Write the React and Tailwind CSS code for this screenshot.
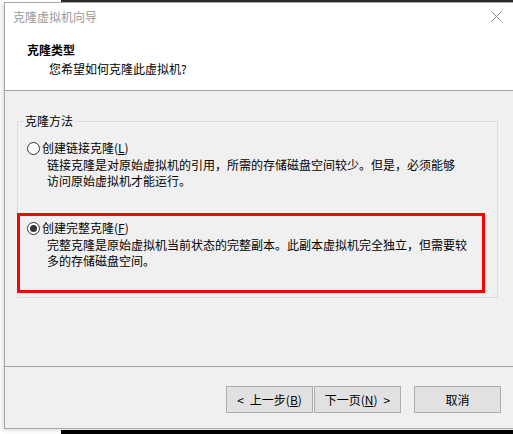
import React from "react";

const font = { fontFamily: '"Microsoft YaHei", "Noto Sans CJK SC", "Noto Sans", sans-serif' };

function Radio({ checked }) {
  return (
    <span className="w-[13px] h-[13px] rounded-full border border-[#333333] bg-white flex items-center justify-center shrink-0">
      {checked && <span className="w-[7px] h-[7px] rounded-full bg-[#333333]" />}
    </span>
  );
}

function Btn({ children, className = "" }) {
  return (
    <div className={"w-[87px] h-[27px] border border-[#adadad] bg-[#e1e1e1] flex items-center justify-center text-[12px] leading-[16px] text-black " + className}>
      {children}
    </div>
  );
}

export default function App() {
  return (
    <div className="w-[513px] h-[434px] bg-white overflow-hidden flex flex-col" style={font}>
      <div className="h-[2px] ml-[61px] bg-[#2b2b2b] shrink-0" />
      <div className="ml-[4px] w-[520px] h-[427px] border border-[#a6a6a6] flex flex-col shrink-0 shadow-[-2px_2px_4px_rgba(0,0,0,0.12)]">
        {/* header */}
        <div className="bg-white h-[88px] border-b border-[#a0a0a0] flex flex-col shrink-0">
          <div className="w-[508px] flex items-center justify-between pt-[6px] pl-[8px] pr-[11px]">
            <span className="text-[12px] leading-[16px] text-[#999999]">克隆虚拟机向导</span>
            <svg width="11" height="11" viewBox="0 0 11 11" className="mt-[-1px]">
              <path d="M0.5 0.5 L10.5 10.5 M10.5 0.5 L0.5 10.5" stroke="#8a8a8a" strokeWidth="1" fill="none" />
            </svg>
          </div>
          <div className="mt-[17px] pl-[22px] text-[12px] leading-[16px] font-bold text-black">克隆类型</div>
          <div className="mt-[3px] pl-[44px] text-[12px] leading-[16px] text-black">您希望如何克隆此虚拟机?</div>
        </div>
        {/* body */}
        <div className="bg-[#f0f0f0] h-[275px] shrink-0 pt-[22px] pl-[12px]">
          <fieldset className="w-[481px] h-[185px] border border-[#dcdcdc] m-0 p-0">
            <legend className="ml-[6px] px-[1px] text-[12px] leading-[16px] text-black">克隆方法</legend>
            <div className="mt-[11px] pl-[9px]">
              <div className="flex items-center gap-[2px] text-[12px] leading-[16px] text-black">
                <Radio />
                <span>创建链接克隆(<span className="underline">L</span>)</span>
              </div>
              <div className="mt-[1px] pl-[20px] text-[12px] leading-[16px] text-black">
                <div>链接克隆是对原始虚拟机的引用，所需的存储磁盘空间较少。但是，必须能够</div>
                <div>访问原始虚拟机才能运行。</div>
              </div>
            </div>
            <div className="relative mt-[31px] pl-[9px]">
              <div className="flex items-center gap-[2px] text-[12px] leading-[16px] text-black">
                <Radio checked />
                <span>创建完整克隆(<span className="underline">F</span>)</span>
              </div>
              <div className="mt-[1px] pl-[20px] text-[12px] leading-[16px] text-black">
                <div>完整克隆是原始虚拟机当前状态的完整副本。此副本虚拟机完全独立，但需要较</div>
                <div>多的存储磁盘空间。</div>
              </div>
              <div className="absolute left-[-1px] top-[-7px] w-[468px] h-[80px] border-[3px] border-[#ff0000] pointer-events-none" />
            </div>
          </fieldset>
        </div>
        {/* footer */}
        <div className="bg-[#f0f0f0] flex-1 border-t border-[#a0a0a0] pt-[19px] pl-[221px] flex items-start">
          <Btn>
            <span className="mr-[6px]">&lt;</span>上一步(<span className="underline">B</span>)
          </Btn>
          <Btn className="ml-[1px]">
            下一页(<span className="underline">N</span>)<span className="ml-[6px]">&gt;</span>
          </Btn>
          <Btn className="ml-[13px]">取消</Btn>
        </div>
      </div>
      <div className="h-[4px] mt-[1px] ml-[61px] bg-black shrink-0" />
    </div>
  );
}
